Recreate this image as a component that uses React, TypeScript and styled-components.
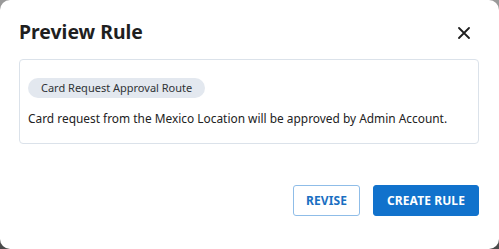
import React from "react";
import styled, { createGlobalStyle } from "styled-components";

const Global = createGlobalStyle`
  html, body { margin: 0; padding: 0; }
  body {
    width: 499px;
    height: 249px;
    overflow: hidden;
    background: linear-gradient(180deg, #9a9a9a 0%, #6a6a6a 60%, #4a4a4a 100%);
    font-family: "Noto Sans", "Open Sans", sans-serif;
  }
`;

const Modal = styled.div`
  box-sizing: border-box;
  width: 499px;
  height: 249px;
  background: #ffffff;
  border-radius: 10px;
  padding: 18px 20px 0 19px;
  display: flex;
  flex-direction: column;
`;

const Header = styled.div`
  display: flex;
  align-items: center;
  justify-content: space-between;
  height: 28px;
`;

const Title = styled.h2`
  margin: 0;
  font-size: 19.4px;
  line-height: 28px;
  font-weight: 700;
  color: #1f1f1f;
`;

const CloseButton = styled.button`
  border: none;
  background: transparent;
  padding: 0;
  width: 14px;
  height: 14px;
  margin-right: 8px;
  margin-top: 2px;
  display: flex;
  align-items: center;
  justify-content: center;
  cursor: pointer;
`;

const PreviewBox = styled.div`
  margin-top: 13px;
  border: 1px solid #dbe2ea;
  border-radius: 4px;
  padding: 18px 9px 16px 8px;
  display: flex;
  flex-direction: column;
  align-items: flex-start;
`;

const Chip = styled.span`
  display: inline-flex;
  align-items: center;
  height: 20px;
  padding: 0 13px;
  border-radius: 10px;
  background: #e3e8ef;
  color: #2f3336;
  font-size: 11px;
  line-height: 20px;
`;

const Description = styled.p`
  margin: 11px 0 0;
  font-size: 11.9px;
  line-height: 18px;
  color: #222222;
`;

const Footer = styled.div`
  margin-top: 41px;
  display: flex;
  justify-content: flex-end;
  gap: 13px;
`;

const Button = styled.button<{ $primary?: boolean }>`
  box-sizing: border-box;
  height: 31px;
  padding: 0 ${(p) => (p.$primary ? "13px" : "12px")};
  border-radius: 3px;
  font-family: "Noto Sans", "Open Sans", sans-serif;
  font-size: 12px;
  font-weight: 700;
  letter-spacing: 0.1px;
  cursor: pointer;
  border: 1px solid ${(p) => (p.$primary ? "#1172cc" : "#8fbde8")};
  background: ${(p) => (p.$primary ? "#1172cc" : "#ffffff")};
  color: ${(p) => (p.$primary ? "#ffffff" : "#1a6fc2")};
`;

export default function App() {
  return (
    <>
      <Global />
      <Modal>
        <Header>
          <Title>Preview Rule</Title>
          <CloseButton aria-label="Close">
            <svg width="12" height="12" viewBox="0 0 12 12">
              <path d="M1 1 L11 11 M11 1 L1 11" stroke="#1f1f1f" strokeWidth="1.8" strokeLinecap="round" />
            </svg>
          </CloseButton>
        </Header>
        <PreviewBox>
          <Chip>Card Request Approval Route</Chip>
          <Description>
            Card request from the Mexico Location will be approved by Admin Account.
          </Description>
        </PreviewBox>
        <Footer>
          <Button>REVISE</Button>
          <Button $primary>CREATE RULE</Button>
        </Footer>
      </Modal>
    </>
  );
}
